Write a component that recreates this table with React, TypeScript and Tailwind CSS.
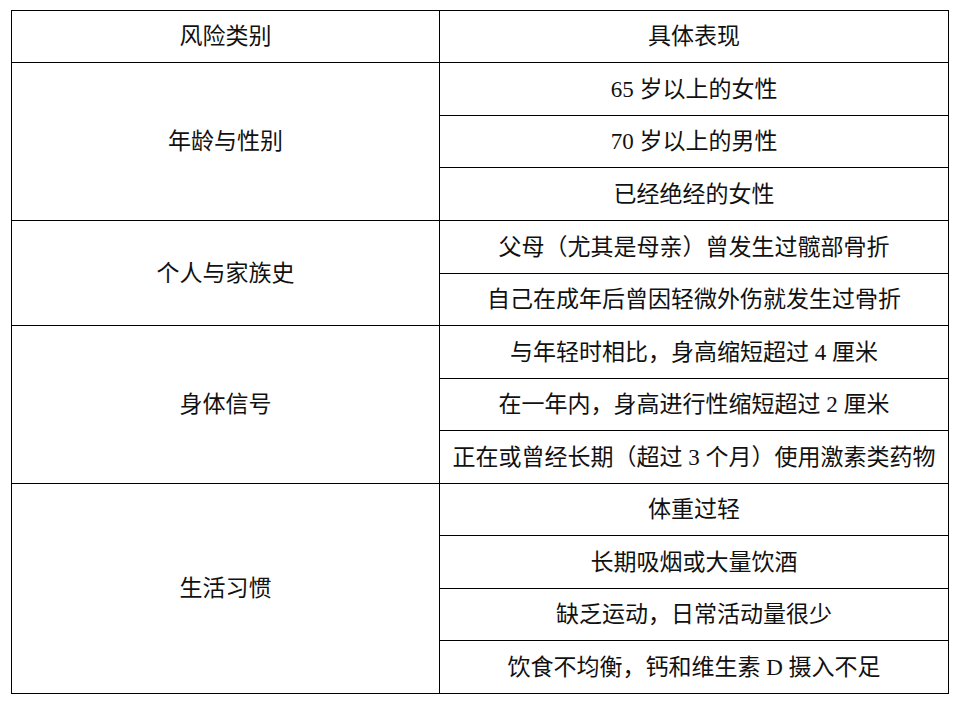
const rows: { category: string; items: string[] }[] = [
  { category: "年龄与性别", items: ["65 岁以上的女性", "70 岁以上的男性", "已经绝经的女性"] },
  {
    category: "个人与家族史",
    items: ["父母（尤其是母亲）曾发生过髋部骨折", "自己在成年后曾因轻微外伤就发生过骨折"],
  },
  {
    category: "身体信号",
    items: [
      "与年轻时相比，身高缩短超过 4 厘米",
      "在一年内，身高进行性缩短超过 2 厘米",
      "正在或曾经长期（超过 3 个月）使用激素类药物",
    ],
  },
  {
    category: "生活习惯",
    items: ["体重过轻", "长期吸烟或大量饮酒", "缺乏运动，日常活动量很少", "饮食不均衡，钙和维生素 D 摄入不足"],
  },
];

const rowStarts = [2, 5, 7, 10];
const rowSpans = ["row-span-3", "row-span-2", "row-span-3", "row-span-4"];
const rowStartClasses = ["row-start-2", "row-start-5", "row-start-7", "row-start-10"];

const cell = "flex items-center justify-center border-r border-b border-black";

export default function App() {
  return (
    <div className="min-h-[708px] w-[963px] bg-white pt-[10px] pl-[11px]">
      <div
        className="grid w-[938px] grid-cols-[428px_509px] grid-rows-[52px_53px_52px_53px_53px_52px_53px_52px_53px_52px_53px_52px_53px] border-t border-l border-black text-[23px] leading-none text-[#111]"
        style={{ fontFamily: '"Liberation Serif", "Noto Sans CJK SC", serif' }}
      >
        <div className={`${cell} col-start-1 row-start-1`}>风险类别</div>
        <div className={`${cell} col-start-2 row-start-1`}>具体表现</div>
        {rows.map((group, gi) => (
          <div key={group.category} className={`${cell} col-start-1 ${rowStartClasses[gi]} ${rowSpans[gi]}`}>
            {group.category}
          </div>
        ))}
        {rows.map((group, gi) =>
          group.items.map((item, ii) => (
            <div
              key={item}
              className={`${cell} col-start-2`}
              style={{ gridRowStart: rowStarts[gi] + ii }}
            >
              {item}
            </div>
          ))
        )}
      </div>
    </div>
  );
}
